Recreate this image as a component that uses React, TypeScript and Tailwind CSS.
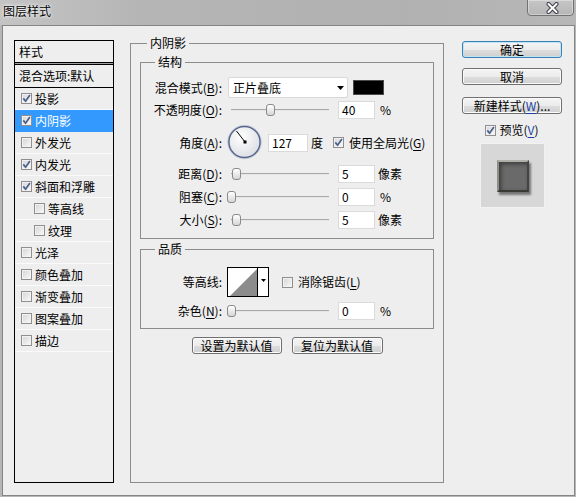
import React from "react";

const font = "font-['Noto_Sans_CJK_SC','Noto_Sans',sans-serif]";

function U({ children, blue }: { children: React.ReactNode; blue?: boolean }) {
  return (
    <span className={blue ? "text-[#1c3fa8] underline underline-offset-[2px]" : "underline underline-offset-[2px]"}>
      {children}
    </span>
  );
}

function Check({ on }: { on?: boolean }) {
  return (
    <span className="flex h-[11px] w-[11px] shrink-0 items-center justify-center border border-[#8f8f8f] bg-[linear-gradient(135deg,#d4d4d4,#fafafa)] shadow-[inset_0_0_0_1px_#f2f2f2]">
      {on && (
        <svg width="9" height="9" viewBox="0 0 9 9">
          <path d="M1.3 4.4 L3.6 7.2 L7.9 1.1" stroke="#4b5d8c" strokeWidth="1.7" fill="none" />
        </svg>
      )}
    </span>
  );
}

function Slider({ at }: { at: number }) {
  return (
    <div className="relative h-[14px] w-[111px] shrink-0">
      <div className="absolute left-[4px] top-[6px] h-[2px] w-[98px] border-t border-[#a8a8a8] bg-[#e6e6e6]" />
      <div
        className="absolute top-[1px] h-[12px] w-[9px] rounded-[3px] border border-[#8a8a8a] bg-[linear-gradient(to_bottom,#ffffff,#d6d6d6)]"
        style={{ left: at }}
      />
    </div>
  );
}

function Num({ v }: { v: string }) {
  return (
    <div className="flex h-[18px] w-[37px] shrink-0 items-center border border-[#dadada] bg-white pl-[3px]">{v}</div>
  );
}

function Btn({ children, primary, w }: { children: React.ReactNode; primary?: boolean; w: string }) {
  return (
    <div
      className={`${w} flex h-[17px] items-center justify-center rounded-[3px] border bg-[linear-gradient(to_bottom,#f4f4f4_0%,#ececec_50%,#dedede_50%,#d0d0d0_100%)] ${
        primary
          ? "border-[#3c7fb1] shadow-[inset_0_0_0_1px_#bfe3f7]"
          : "border-[#707070] shadow-[inset_0_0_0_1px_#fbfbfb]"
      }`}
    >
      {children}
    </div>
  );
}

function Arrow() {
  return (
    <svg width="7" height="4" viewBox="0 0 7 4">
      <polygon points="0,0 7,0 3.5,4" fill="#000" />
    </svg>
  );
}

function ListRow({
  label,
  on,
  sub,
  active,
}: {
  label: string;
  on?: boolean;
  sub?: boolean;
  active?: boolean;
}) {
  return (
    <div
      className={`flex h-[22px] shrink-0 items-center gap-[2px] border-b ${sub ? "pl-[19px]" : "pl-[6px]"} ${
        active ? "border-[#3399ff] bg-[#3399ff] text-white" : "border-[#fafafa]"
      }`}
    >
      <Check on={on} />
      <span className="pl-[1px]">{label}</span>
    </div>
  );
}

function Label({ children }: { children: React.ReactNode }) {
  return <div className="w-[81px] shrink-0 text-right">{children}</div>;
}

export default function App() {
  return (
    <div className={`${font} h-[497px] w-[576px] overflow-hidden bg-[#b6b6b6] text-[12px] leading-[16px] text-black`}>
      {/* title bar */}
      <div className="flex h-[25px] items-start justify-between bg-[linear-gradient(to_right,#c4c4c4,#b5b5b5_25%,#b1b1b1_70%,#b7b7b7)]">
        <div className="pl-[3px] pt-[3px] [text-shadow:0_0_4px_#ffffff,0_0_2px_#ffffff]">图层样式</div>
        <div className="mr-[2px] mt-[-1px] flex h-[17px] w-[47px] items-center justify-center rounded-b-[4px] border border-[#727272] bg-[linear-gradient(to_bottom,#c6c6c6,#b6b6b6)] shadow-[inset_0_0_0_1px_rgba(255,255,255,0.35)]">
          <svg width="13" height="12" viewBox="0 0 13 12" className="ml-[3px]">
            <path d="M2.5 2 L10.5 10 M10.5 2 L2.5 10" stroke="#3e3e4c" strokeWidth="4" strokeLinecap="round" />
            <path d="M2.5 2 L10.5 10 M10.5 2 L2.5 10" stroke="#ffffff" strokeWidth="2" strokeLinecap="round" />
          </svg>
        </div>
      </div>

      {/* client area */}
      <div className="ml-[2px] flex h-[471px] w-[573px] border border-[#858585] bg-[#eeeeee] pl-[11px]">
        {/* left list */}
        <div className="mt-[14px] flex h-[443px] w-[100px] shrink-0 flex-col border border-black">
          <div className="h-[22px] shrink-0 border-b border-black pl-[4px] leading-[21px]">样式</div>
          <div className="h-[1px] shrink-0 bg-[#a0a0a0]" />
          <div className="flex h-[24px] shrink-0 items-center border-y border-black pl-[4px]">混合选项:默认</div>
          <ListRow label="投影" on />
          <ListRow label="内阴影" on active />
          <ListRow label="外发光" />
          <ListRow label="内发光" on />
          <ListRow label="斜面和浮雕" on />
          <ListRow label="等高线" sub />
          <ListRow label="纹理" sub />
          <ListRow label="光泽" />
          <ListRow label="颜色叠加" />
          <ListRow label="渐变叠加" />
          <ListRow label="图案叠加" />
          <ListRow label="描边" />
        </div>

        {/* main group */}
        <div className="relative ml-[16px] mt-[17px] h-[440px] w-[314px] shrink-0 border border-[#8c8c8c] pt-[18px]">
          <span className="absolute left-[16px] top-[-9px] bg-[#eeeeee] px-[3px]">内阴影</span>

          {/* 结构 */}
          <div className="relative ml-[9px] flex h-[177px] w-[294px] flex-col border border-[#8c8c8c] pt-[14px]">
            <span className="absolute left-[14px] top-[-9px] bg-[#eeeeee] px-[3px]">结构</span>

            <div className="flex h-[21px] items-center">
              <Label>
                混合模式(<U>B</U>):
              </Label>
              <div className="ml-[6px] flex h-[21px] w-[120px] items-center justify-between rounded-[2px] border border-[#d9d9d9] bg-white pl-[4px] pr-[3px]">
                <span>正片叠底</span>
                <Arrow />
              </div>
              <div className="ml-[5px] h-[15px] w-[31px] border border-[#4a4a4a] bg-black" />
            </div>

            <div className="mt-[3px] flex h-[18px] items-center">
              <Label>
                不透明度(<U>O</U>):
              </Label>
              <div className="ml-[5px]">
                <Slider at={39} />
              </div>
              <Num v="40" />
              <span className="ml-[5px]">%</span>
            </div>

            <div className="mt-[6px] flex h-[35px] items-center">
              <Label>
                角度(<U>A</U>):
              </Label>
              <svg width="36" height="35" viewBox="0 0 36 35" className="ml-[5px] shrink-0">
                <defs>
                  <radialGradient id="dialg" cx="40%" cy="35%" r="70%">
                    <stop offset="0" stopColor="#ffffff" />
                    <stop offset="1" stopColor="#dcdde2" />
                  </radialGradient>
                </defs>
                <circle cx="17.5" cy="17" r="16.8" fill="none" stroke="#c9cdd9" strokeWidth="1" />
                <circle cx="17.5" cy="17" r="15.6" fill="url(#dialg)" stroke="#57668e" strokeWidth="1.5" />
                <line x1="18" y1="17" x2="9.5" y2="6" stroke="#000" strokeWidth="1" />
                <rect x="16.5" y="15.5" width="3" height="3" fill="#000" />
              </svg>
              <div className="ml-[5px] flex h-[18px] w-[40px] shrink-0 items-center border border-[#dadada] bg-white pl-[3px]">
                127
              </div>
              <span className="ml-[3px]">度</span>
              <div className="ml-[10px] flex items-center gap-[5px]">
                <Check on />
                <span>
                  使用全局光(<U>G</U>)
                </span>
              </div>
            </div>

            <div className="mt-[2px] flex h-[23px] items-center">
              <Label>
                距离(<U>D</U>):
              </Label>
              <div className="ml-[5px]">
                <Slider at={5} />
              </div>
              <Num v="5" />
              <span className="ml-[3px]">像素</span>
            </div>
            <div className="flex h-[23px] items-center">
              <Label>
                阻塞(<U>C</U>):
              </Label>
              <div className="ml-[5px]">
                <Slider at={0} />
              </div>
              <Num v="0" />
              <span className="ml-[5px]">%</span>
            </div>
            <div className="flex h-[23px] items-center">
              <Label>
                大小(<U>S</U>):
              </Label>
              <div className="ml-[5px]">
                <Slider at={5} />
              </div>
              <Num v="5" />
              <span className="ml-[3px]">像素</span>
            </div>
          </div>

          {/* 品质 */}
          <div className="relative ml-[9px] mt-[10px] flex h-[80px] w-[294px] flex-col border border-[#8c8c8c] pt-[17px]">
            <span className="absolute left-[14px] top-[-9px] bg-[#eeeeee] px-[3px]">品质</span>
            <div className="flex h-[30px] items-center">
              <Label>等高线:</Label>
              <div className="ml-[5px] flex h-[30px] w-[42px] shrink-0 border border-black bg-white">
                <svg width="29" height="28" viewBox="0 0 29 28" className="shrink-0">
                  <polygon points="2,28 29,1 29,28" fill="#8c8c8c" />
                </svg>
                <div className="flex w-[11px] justify-center border-l border-black pt-[11px]">
                  <svg width="5" height="3" viewBox="0 0 5 3">
                    <polygon points="0,0 5,0 2.5,3" fill="#000" />
                  </svg>
                </div>
              </div>
              <div className="ml-[13px] flex items-center gap-[5px]">
                <Check />
                <span>
                  消除锯齿(<U>L</U>)
                </span>
              </div>
            </div>
            <div className="mt-[5px] flex h-[18px] items-center">
              <Label>
                杂色(<U>N</U>):
              </Label>
              <div className="ml-[5px]">
                <Slider at={0} />
              </div>
              <Num v="0" />
              <span className="ml-[5px]">%</span>
            </div>
          </div>

          <div className="mt-[8px] flex justify-center gap-[10px]">
            <Btn w="w-[90px]">设置为默认值</Btn>
            <Btn w="w-[91px]">复位为默认值</Btn>
          </div>
        </div>

        {/* right column */}
        <div className="ml-[18px] flex w-[100px] shrink-0 flex-col">
          <div className="mt-[15px]">
            <Btn w="w-[100px]" primary>
              确定
            </Btn>
          </div>
          <div className="mt-[10px]">
            <Btn w="w-[100px]">取消</Btn>
          </div>
          <div className="mt-[12px]">
            <Btn w="w-[100px]">
              新建样式(<U blue>W</U>)...
            </Btn>
          </div>
          <div className="mt-[8px] flex h-[16px] items-center justify-center gap-[2px]">
            <Check on />
            <span className="pl-[1px]">
              预览(<U blue>V</U>)
            </span>
          </div>
          <div className="mx-auto mt-[5px] flex h-[65px] w-[65px] items-center justify-center border border-[#f2f2f2] bg-[#d7d7d7]">
            <div className="ml-[2px] h-[32px] w-[32px] border-2 border-b-[#3a3a35] border-l-[#8e8e88] border-r-[#45453f] border-t-[#b0b0a8] bg-[#6a6a6a] shadow-[inset_2px_2px_4px_rgba(0,0,0,0.45),2px_3px_2px_rgba(0,0,0,0.45)]" />
          </div>
        </div>
      </div>
    </div>
  );
}
